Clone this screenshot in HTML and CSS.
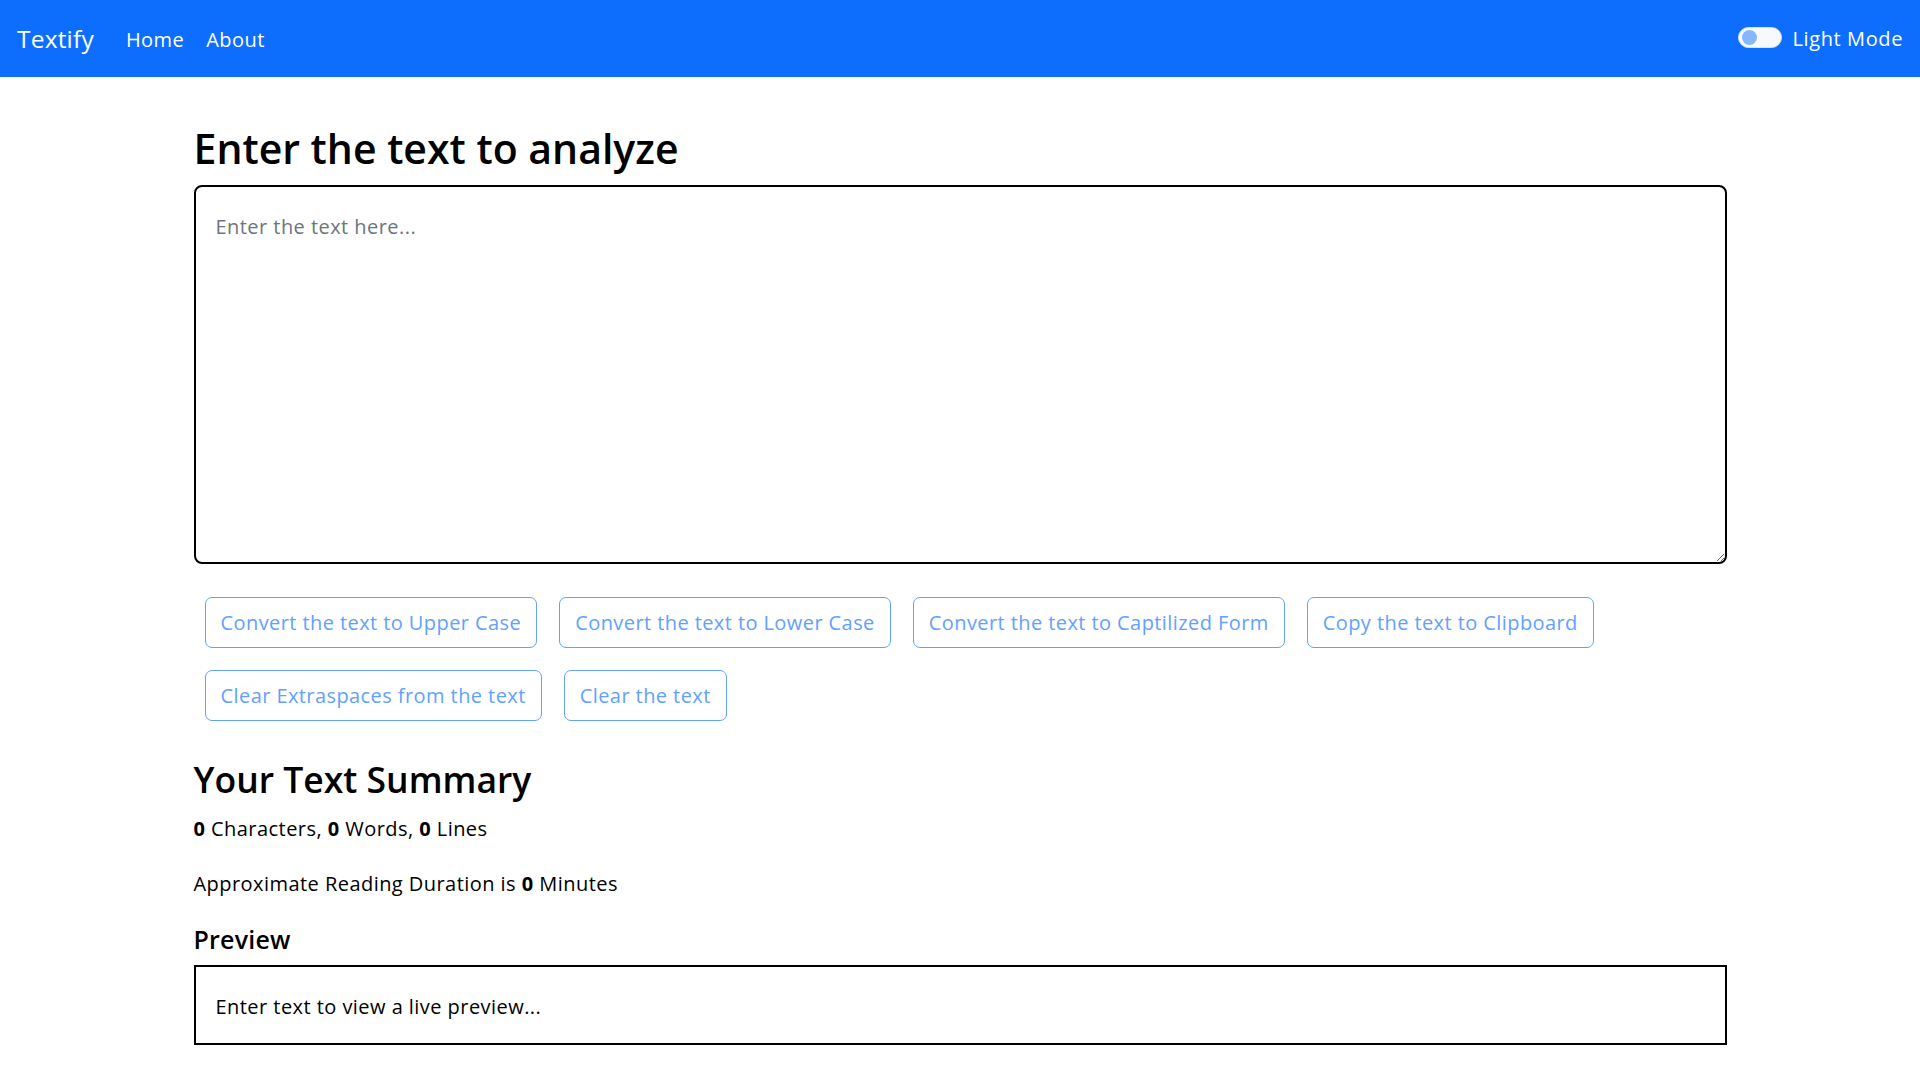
FILE: index.html
```html
<!DOCTYPE html>
<html lang="en">
<head>
<meta charset="utf-8">
<title>Textify</title>
<link rel="stylesheet" href="styles.css">
</head>
<body>
<nav class="navbar">
  <a class="brand" href="#">Textify</a>
  <ul class="nav-links">
    <li><a class="nav-link" href="#">Home</a></li>
    <li><a class="nav-link" href="#">About</a></li>
  </ul>
  <div class="mode">
    <span class="switch"><span class="knob"></span></span>
    <span class="mode-label">Light Mode</span>
  </div>
</nav>
<main class="container">
  <h1 class="title">Enter the text to analyze</h1>
  <textarea class="text-input" placeholder="Enter the text here..."></textarea>
  <div class="actions">
    <button class="btn" disabled>Convert the text to Upper Case</button>
    <button class="btn" disabled>Convert the text to Lower Case</button>
    <button class="btn" disabled>Convert the text to Captilized Form</button>
    <button class="btn" disabled>Copy the text to Clipboard</button>
    <button class="btn" disabled>Clear Extraspaces from the text</button>
    <button class="btn" disabled>Clear the text</button>
  </div>
  <h2 class="summary-title">Your Text Summary</h2>
  <p class="stats"><b>0</b> Characters, <b>0</b> Words, <b>0</b> Lines</p>
  <p class="duration">Approximate Reading Duration is <b>0</b> Minutes</p>
  <h5 class="preview-title">Preview</h5>
  <div class="preview">Enter text to view a live preview...</div>
</main>
</body>
</html>
```

FILE: styles.css
```css
* { box-sizing: border-box; }
html, body { margin: 0; padding: 0; }
body {
  font-family: "Open Sans", "Noto Sans", sans-serif;
  font-size: 20px;
  letter-spacing: 0.45px;
  line-height: 30px;
  color: #000;
  background: #fff;
}
.navbar {
  height: 77px;
  background: #0d6efd;
  display: flex;
  align-items: center;
  padding: 0 17px 0 17px;
}
.brand {
  color: #fff;
  text-decoration: none;
  font-size: 24.5px;
  letter-spacing: 0.2px;
  line-height: 40px;
  margin-right: 22px;
  padding-top: 1px;
}
.nav-links {
  display: flex;
  list-style: none;
  margin: 0;
  padding: 0;
  gap: 2px;
}
.nav-link {
  display: block;
  color: #fff;
  text-decoration: none;
  padding: 2px 10px 0;
}
.mode {
  margin-left: auto;
  display: flex;
  align-items: center;
  gap: 11px;
  color: #fff;
}
.switch {
  width: 44px;
  height: 21px;
  border-radius: 11px;
  background: #f8f9fa;
  border: 1px solid #dee2e6;
  display: flex;
  align-items: center;
  padding-left: 3px;
  margin-top: -3px;
}
.knob {
  width: 15px;
  height: 15px;
  border-radius: 50%;
  background: #86b7fe;
}
.mode-label { line-height: 30px; letter-spacing: 0.6px; }
.container {
  width: 1533px;
  margin: 0 auto;
  padding-top: 47px;
}
.title, .summary-title {
  font-weight: 600;
  margin: 0;
  letter-spacing: 0;
}
.title {
  font-size: 41px;
  line-height: 48px;
}
.summary-title {
  font-size: 35.5px;
  line-height: 48px;
  margin-top: 34px;
}
.text-input {
  display: block;
  width: 100%;
  height: 379px;
  margin-top: 13px;
  border: 2px solid #000;
  border-radius: 8px;
  padding: 25px 20px 20px;
  font-family: inherit;
  font-size: 20px;
  letter-spacing: 0.45px;
  line-height: 30px;
  color: #000;
  resize: vertical;
  outline: none;
}
.text-input::placeholder { color: #6c757d; opacity: 1; }
.actions {
  display: flex;
  flex-wrap: wrap;
  gap: 22px;
  padding-left: 11px;
  margin-top: 33px;
  width: 1440px;
}
.btn {
  height: 51px;
  padding: 0 15px;
  border: 1.25px solid #62a1fe;
  border-radius: 7px;
  background: #fff;
  color: #62a1fe;
  font-family: inherit;
  font-size: 20px;
  letter-spacing: 0.42px;
  line-height: 30px;
}
.stats { margin: 11px 0 0; }
.duration { margin: 25px 0 0; }
.preview-title {
  font-size: 25px;
  letter-spacing: 0.2px;
  line-height: 30px;
  font-weight: 600;
  margin: 25px 0 0;
}
.preview {
  margin-top: 11px;
  border: 2px solid #000;
  padding: 25px 20px 21px;
  line-height: 30px;
}
b { font-weight: 700; }
```
